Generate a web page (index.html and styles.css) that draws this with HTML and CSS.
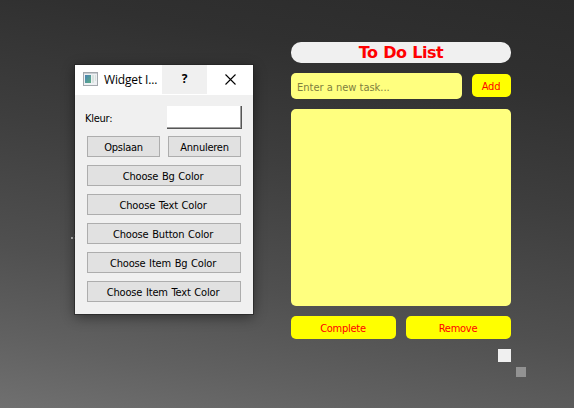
FILE: index.html
```html
<!DOCTYPE html>
<html lang="nl">
<head>
<meta charset="utf-8">
<title>To Do List</title>
<link rel="stylesheet" href="styles.css">
</head>
<body>
<main class="desktop">
  <i class="desktop-mark"></i>
  <section class="dialog">
    <header class="titlebar">
      <svg class="app-icon" width="15" height="14" viewBox="0 0 15 14">
        <defs><linearGradient id="pane" x1="0" y1="0" x2="1" y2="1"><stop offset="0" stop-color="#4a83b5"/><stop offset="1" stop-color="#5cae83"/></linearGradient></defs>
        <path fill="#a3a8ad" d="M0 0h15v14H0z"/>
        <path fill="#eef0f3" d="M1 2h13v11H1z"/>
        <path fill="#c9cdd2" d="M1 1h13v1H1z"/>
        <path fill="url(#pane)" d="M2 3h6v8H2z"/>
        <path fill="#d8e3df" d="M9 3h2v8H9zM12 3h1v6h-1z"/>
      </svg>
      <span class="window-title">Widget I...</span>
      <span class="help">?</span>
      <span class="close"><svg width="11" height="11" viewBox="0 0 11 11"><path d="M.5.5l10 10M10.5.5l-10 10" fill="none" stroke="#000" stroke-width="1.1"/></svg></span>
    </header>
    <div class="dialog-body">
      <div class="color-row"><label class="kleur">Kleur:</label><span class="swatch"></span></div>
      <div class="pair"><button class="btn">Opslaan</button><button class="btn">Annuleren</button></div>
      <button class="btn wide">Choose Bg Color</button>
      <button class="btn wide">Choose Text Color</button>
      <button class="btn wide">Choose Button Color</button>
      <button class="btn wide">Choose Item Bg Color</button>
      <button class="btn wide">Choose Item Text Color</button>
    </div>
  </section>
  <section class="todo">
    <h1 class="heading">To Do List</h1>
    <div class="entry"><input class="task" type="text" placeholder="Enter a new task..."><button class="action add">Add</button></div>
    <div class="list"></div>
    <div class="actions"><button class="action">Complete</button><button class="action">Remove</button></div>
    <span class="color-chip"></span>
    <span class="grip"></span>
  </section>
</main>
</body>
</html>
```
FILE: styles.css
```css
* { box-sizing: border-box; }

body {
  margin: 0;
  font: 11px/13px "DejaVu Sans Condensed", "DejaVu Sans", sans-serif;
  font-stretch: condensed;
  letter-spacing: -0.25px;
  color: #000;
}

button, input { font: inherit; letter-spacing: inherit; margin: 0; }

.desktop {
  position: relative;
  display: flex;
  align-items: flex-start;
  gap: 38px;
  width: 574px;
  height: 408px;
  padding: 42px 0 0 75px;
  overflow: hidden;
  background: linear-gradient(190deg, #2b2b2b 0%, #303030 18%, #3e3e3e 42%, #505050 68%, #616161 86%, #707070 100%);
}

.desktop-mark {
  position: absolute;
  left: 71px;
  top: 237px;
  width: 2px;
  height: 2px;
  background: #b5b5b5;
  box-shadow: 3px 0 #888, 3px -3px #777;
}

.dialog {
  position: relative;
  width: 178px;
  height: 249px;
  margin-top: 23px;
  background: #f0f0f0;
  box-shadow: 0 0 0 1px rgba(35, 35, 35, 0.65), 0 3px 12px rgba(0, 0, 0, 0.45);
}

.titlebar {
  display: flex;
  height: 30px;
  padding-left: 8px;
  background: #fff;
}

.app-icon { flex: none; margin-top: 7px; }

.window-title {
  width: 64px;
  padding: 7px 0 0 6px;
  white-space: nowrap;
  font: 12px/16px "Open Sans", "Noto Sans", sans-serif;
  letter-spacing: -0.15px;
}

.help {
  width: 45px;
  height: 29px;
  background: #f0f0f0;
  text-align: center;
  font: bold 12px/28px "Open Sans", sans-serif;
}

.close { display: flex; flex: 1; justify-content: center; padding: 9px 0 0 0; }

.dialog-body {
  display: flex;
  flex-direction: column;
  gap: 8px;
  padding: 11px 12px 0;
}

.color-row {
  display: flex;
  justify-content: space-between;
  align-items: center;
  height: 23px;
  margin: 0 -1px -1px -2px;
}

.kleur { padding-top: 1px; }

.swatch {
  width: 75px;
  height: 23px;
  background: #fff;
  border-right: 1px solid #555;
  border-bottom: 1px solid #555;
  box-shadow: inset -1px -1px #a0a0a0;
}

.pair { display: flex; gap: 8px; }
.pair .btn { flex: 1; }

.btn {
  height: 21px;
  padding: 2px 0 0;
  border: 1px solid #adadad;
  border-radius: 0;
  background: #e1e1e1;
  color: #000;
  line-height: 15px;
}

.wide { padding-right: 2px; letter-spacing: -0.15px; word-spacing: 0.6px; }

.todo {
  position: relative;
  display: flex;
  flex-direction: column;
  gap: 10px;
  width: 220px;
}

.heading {
  height: 21px;
  margin: 0;
  border-radius: 10px;
  background: #f0f0f0;
  color: #f00;
  text-align: center;
  font: bold 16px/22px "DejaVu Sans", sans-serif;
  letter-spacing: -0.45px;
  word-spacing: 0.5px;
}

.entry { display: flex; justify-content: space-between; height: 26px; }

.task {
  width: 171px;
  padding: 2px 6px 0;
  border: 0;
  border-radius: 5px;
  background: #ffff7f;
  letter-spacing: 0;
}

.task::placeholder { color: #808040; opacity: 1; }

.action {
  flex: 1;
  height: 23px;
  padding: 1px 1px 0 0;
  border: 0;
  border-radius: 5px;
  background: #ff0;
  color: #f00;
}

.add { flex: 0 0 39px; margin-top: 1px; }
.list { height: 197px; border-radius: 5px; background: #ffff7f; }
.actions { display: flex; gap: 10px; }
.color-chip { align-self: flex-end; width: 13px; height: 13px; background: #f0f0f0; }

.grip {
  position: absolute;
  right: -15px;
  bottom: -15px;
  width: 10px;
  height: 10px;
  background: #929292;
}
```
